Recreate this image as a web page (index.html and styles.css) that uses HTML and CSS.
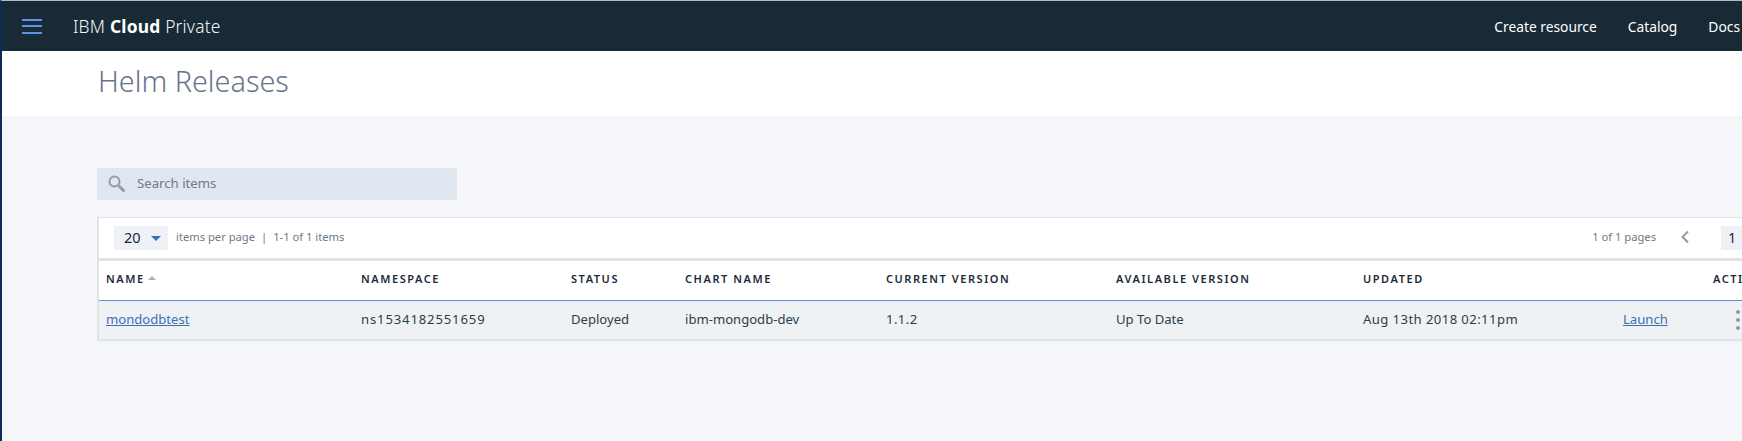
FILE: index.html
```html
<!DOCTYPE html>
<html lang="en">
<head>
<meta charset="utf-8">
<title>Helm Releases</title>
<link rel="stylesheet" href="styles.css">
</head>
<body>
<div class="app">
  <header class="topbar">
    <button class="burger" aria-label="Menu"><span></span><span></span><span></span></button>
    <div class="brand">IBM <b>Cloud</b> Private</div>
    <nav class="topnav">
      <a>Create resource</a>
      <a>Catalog</a>
      <a>Docs</a>
    </nav>
  </header>
  <section class="titlebar"><h1>Helm Releases</h1></section>
  <main class="content">
    <div class="search">
      <svg class="search-icon" viewBox="0 0 18 18" width="18" height="18" aria-hidden="true">
        <circle cx="6.5" cy="6.5" r="5" fill="none" stroke="#929da6" stroke-width="2"/>
        <path d="M11.5 11.5L15.5 15.5" stroke="#929da6" stroke-width="3" stroke-linecap="round"/>
      </svg>
      <span class="search-text">Search items</span>
    </div>
    <div class="table-card">
      <div class="toolbar">
        <div class="pagesize"><span>20</span><i class="caret"></i></div>
        <span class="meta">items per page</span>
        <span class="meta sep">|</span>
        <span class="meta">1-1 of 1 items</span>
        <div class="pager">
          <span class="meta">1 of 1 pages</span>
          <svg class="chev" viewBox="0 0 10 14" width="10" height="14" aria-hidden="true"><path d="M8 1.5L2.5 7L8 12.5" fill="none" stroke="#8c9ba5" stroke-width="2"/></svg>
          <span class="pagenum">1</span>
        </div>
      </div>
      <div class="row head">
        <div class="c1">NAME<i class="sort"></i></div>
        <div class="c2">NAMESPACE</div>
        <div class="c3">STATUS</div>
        <div class="c4">CHART NAME</div>
        <div class="c5">CURRENT VERSION</div>
        <div class="c6">AVAILABLE VERSION</div>
        <div class="c7">UPDATED</div>
        <div class="c8">ACTION</div>
      </div>
      <div class="row body">
        <div class="c1"><a>mondodbtest</a></div>
        <div class="c2 num-wide">ns1534182551659</div>
        <div class="c3">Deployed</div>
        <div class="c4">ibm-mongodb-dev</div>
        <div class="c5 num">1.1.2</div>
        <div class="c6">Up To Date</div>
        <div class="c7 num">Aug 13th 2018 02:11pm</div>
        <div class="c7b"><a>Launch</a></div>
        <div class="c8 dots"><i></i><i></i><i></i></div>
      </div>
    </div>
  </main>
</div>
</body>
</html>
```
FILE: styles.css
```css
* { box-sizing: border-box; }
html, body { margin: 0; height: 100%; overflow: hidden; }
body {
  font-family: "Noto Sans", "Liberation Sans", sans-serif;
  background: #f4f6fa;
  color: #2c3e4a;
}
.app {
  width: 1900px;
  height: 441px;
  border-top: 1px solid #b5b7b9;
  border-left: 2px solid #0b2a56;
}
.topbar {
  height: 50px;
  background: #182a36;
  color: #fff;
  display: flex;
  align-items: center;
  width: 1740px;
}
.burger {
  width: 20px;
  height: 15px;
  margin-left: 20px;
  padding: 0;
  border: 0;
  background: none;
  display: flex;
  flex-direction: column;
  justify-content: space-between;
}
.burger span { display: block; height: 2px; background: #5b93e0; }
.brand { margin-left: 31px; font-size: 17.4px; color: #f4f6f8; font-weight: 300; letter-spacing: .2px; padding-bottom: 1px; }
.brand b { font-weight: 700; color: #fff; }
.topnav { margin-left: auto; display: flex; gap: 31px; font-size: 13.8px; padding-right: 2px; }
.topnav a { color: #fff; }
.titlebar {
  height: 65px;
  background: #fff;
  width: 1740px;
  padding: 12px 0 0 96px;
}
.titlebar h1 {
  margin: 0;
  font-size: 28.8px;
  line-height: 36px;
  font-weight: 300;
  color: #667589;
}
.content { padding: 52px 0 0 95px; }
.search {
  width: 360px;
  height: 32px;
  background: #e1e7f1;
  display: flex;
  align-items: center;
  padding-left: 11px;
  gap: 11px;
  font-size: 13.2px;
  color: #6f7a85;
}
.search-text { padding-bottom: 2px; }
.table-card {
  width: 1780px;
  margin-top: 17px;
  border: 1px solid #dfe3e6;
  border-width: 1px 2px 2px;
  background: #fff;
}
.toolbar {
  height: 43px;
  display: flex;
  align-items: center;
  padding: 0 114px 0 15px;
  font-size: 11.2px;
  color: #6f7a85;
  border-bottom: 3px solid #dfe3e6;
}
.meta { padding-bottom: 3px; }
.pagesize {
  width: 54px;
  height: 24px;
  background: #eef1f6;
  display: flex;
  align-items: center;
  padding: 0 0 2px 10px;
  font-size: 14.5px;
  color: #182a36;
  margin-right: 8px;
}
.caret {
  margin: 2px 0 0 10px;
  border: 5px solid transparent;
  border-top: 5px solid #3d6fb4;
  border-bottom: 0;
}
.sep { margin: 0 6px; }
.pager { margin-left: auto; display: flex; align-items: center; }
.pager .chev { margin: -2px 0 0 24px; }
.pagenum {
  margin-left: 31px;
  width: 40px;
  height: 24px;
  background: #eef1f6;
  color: #182a36;
  font-size: 14.5px;
  line-height: 22px;
  padding-left: 7px;
}
.row {
  display: flex;
  align-items: center;
  padding-left: 7px;
}
.head {
  height: 40px;
  font-size: 11px;
  font-weight: 600;
  letter-spacing: 1.55px;
  color: #1c2b3a;
  border-bottom: 1px solid #5b93e0;
  padding-bottom: 5px;
}
.body {
  height: 38px;
  background: #eff2f5;
  font-size: 13.1px;
  color: #2c3e4a;
  padding-bottom: 2px;
}
.body a { color: #3d6fb4; text-decoration: underline; }
.num { letter-spacing: .42px; }
.num-wide { letter-spacing: .85px; }
.c1 { width: 255px; display: flex; align-items: center; }
.c2 { width: 210px; }
.c3 { width: 114px; }
.c4 { width: 201px; }
.c5 { width: 230px; }
.c6 { width: 247px; }
.c7 { width: 350px; flex: none; }
.body .c7 { width: 260px; }
.c7b { width: 90px; }
.c8 { width: 60px; white-space: nowrap; }
.sort {
  margin-left: 3px;
  border: 4px solid transparent;
  border-bottom: 4px solid #a8b2bb;
  border-top: 0;
}
.dots {
  display: flex;
  flex-direction: column;
  gap: 4px;
  padding-left: 23px;
  margin-top: 2px;
}
.dots i { display: block; width: 4px; height: 4px; border-radius: 50%; background: #8c9ba5; }
```
